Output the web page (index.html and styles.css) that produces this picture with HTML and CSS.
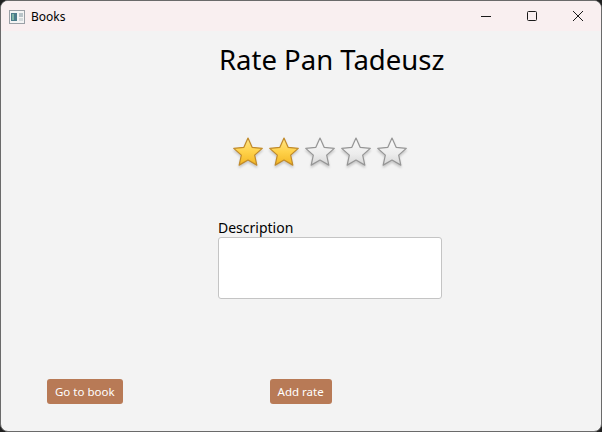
FILE: index.html
```html
<!DOCTYPE html>
<html>
<head>
<meta charset="utf-8">
<link rel="stylesheet" href="styles.css">
</head>
<body>
<div class="window">
  <div class="titlebar">
    <svg class="app-icon" width="16" height="14" viewBox="0 0 16 14">
      <rect x="0.5" y="0.5" width="15" height="13" fill="#f4f4f4" stroke="#9aa0a6"/>
      <rect x="2" y="3" width="6" height="8" fill="#4c7c8a"/>
      <rect x="3" y="4" width="2" height="6" fill="#7fb4a6"/>
      <rect x="10" y="3" width="4" height="4" fill="#b9c4c9"/>
      <rect x="10" y="8" width="4" height="3" fill="#d4dadc"/>
    </svg>
    <span class="title">Books</span>
    <div class="controls">
      <div class="ctl"><svg width="10" height="10" viewBox="0 0 10 10"><path d="M0 5.5H10" stroke="#1a1a1a" stroke-width="1"/></svg></div>
      <div class="ctl"><svg width="10" height="10" viewBox="0 0 10 10"><rect x="0.5" y="0.5" width="9" height="9" rx="1" fill="none" stroke="#1a1a1a" stroke-width="1"/></svg></div>
      <div class="ctl"><svg width="10" height="10" viewBox="0 0 10 10"><path d="M0 0L10 10M10 0L0 10" stroke="#1a1a1a" stroke-width="1"/></svg></div>
    </div>
  </div>
  <div class="content">
    <h1 class="heading">Rate Pan Tadeusz</h1>
    <div class="stars">
      <svg class="star" viewBox="0 0 32 32"><defs><linearGradient id="g1" x1="0" y1="0" x2="0" y2="1"><stop offset="0" stop-color="#ffe68a"/><stop offset="0.5" stop-color="#ffd24a"/><stop offset="1" stop-color="#f3b623"/></linearGradient></defs><path d="M16 2 L20.11 11.34 L30.27 12.36 L22.66 19.16 L24.82 29.13 L16 24 L7.18 29.13 L9.34 19.16 L1.73 12.36 L11.89 11.34 Z" fill="url(#g1)" stroke="#c08a2a" stroke-width="1.2" stroke-linejoin="round"/></svg>
      <svg class="star" viewBox="0 0 32 32"><path d="M16 2 L20.11 11.34 L30.27 12.36 L22.66 19.16 L24.82 29.13 L16 24 L7.18 29.13 L9.34 19.16 L1.73 12.36 L11.89 11.34 Z" fill="url(#g1)" stroke="#c08a2a" stroke-width="1.2" stroke-linejoin="round"/></svg>
      <svg class="star" viewBox="0 0 32 32"><defs><linearGradient id="g2" x1="0" y1="0" x2="0" y2="1"><stop offset="0" stop-color="#fbfbfb"/><stop offset="0.6" stop-color="#ececec"/><stop offset="1" stop-color="#d6d6d6"/></linearGradient></defs><path d="M16 2 L20.11 11.34 L30.27 12.36 L22.66 19.16 L24.82 29.13 L16 24 L7.18 29.13 L9.34 19.16 L1.73 12.36 L11.89 11.34 Z" fill="url(#g2)" stroke="#959595" stroke-width="1.2" stroke-linejoin="round"/></svg>
      <svg class="star" viewBox="0 0 32 32"><path d="M16 2 L20.11 11.34 L30.27 12.36 L22.66 19.16 L24.82 29.13 L16 24 L7.18 29.13 L9.34 19.16 L1.73 12.36 L11.89 11.34 Z" fill="url(#g2)" stroke="#959595" stroke-width="1.2" stroke-linejoin="round"/></svg>
      <svg class="star" viewBox="0 0 32 32"><path d="M16 2 L20.11 11.34 L30.27 12.36 L22.66 19.16 L24.82 29.13 L16 24 L7.18 29.13 L9.34 19.16 L1.73 12.36 L11.89 11.34 Z" fill="url(#g2)" stroke="#959595" stroke-width="1.2" stroke-linejoin="round"/></svg>
    </div>
    <label class="label">Description</label>
    <div class="textarea"></div>
  </div>
  <div class="actions">
    <button class="btn">Go to book</button>
    <button class="btn">Add rate</button>
  </div>
</div>
</body>
</html>
```
FILE: styles.css
```css
html, body {
  margin: 0;
  padding: 0;
  background: #202020;
}
.window {
  width: 600px;
  height: 430px;
  border: 1px solid #6a6a6a;
  border-radius: 8px;
  overflow: hidden;
  background: #f3f3f3;
  display: flex;
  flex-direction: column;
  font-family: "Noto Sans", "Open Sans", sans-serif;
}
.titlebar {
  height: 30px;
  background: #f9eff0;
  display: flex;
  align-items: center;
  flex-shrink: 0;
}
.app-icon {
  margin-left: 8px;
  margin-top: 1px;
}
.title {
  margin-left: 6px;
  font-size: 12px;
  color: #000;
}
.controls {
  margin-left: auto;
  display: flex;
  height: 100%;
}
.ctl {
  width: 46px;
  display: flex;
  align-items: center;
  justify-content: center;
}
.content {
  display: flex;
  flex-direction: column;
  padding-left: 217px;
  flex: 1;
}
.heading {
  margin: 11px 0 0 1px;
  font-size: 27.5px;
  font-weight: 400;
  line-height: 36px;
  color: #000;
}
.stars {
  display: flex;
  gap: 4px;
  margin: 58px 0 0 14px;
}
.star {
  width: 32px;
  height: 32px;
  filter: drop-shadow(0 2px 1px rgba(0,0,0,0.18));
}
.label {
  margin-top: 51px;
  font-size: 14px;
  line-height: 18px;
  color: #000;
}
.textarea {
  width: 222px;
  height: 60px;
  background: #fff;
  border: 1px solid #c4c4c4;
  border-radius: 3px;
}
.actions {
  display: flex;
  gap: 147px;
  padding-left: 46px;
  margin-bottom: 27px;
}
.btn {
  height: 25px;
  padding: 0 8px;
  border: none;
  border-radius: 3px;
  background: #b87a56;
  color: #fff;
  font-family: "Noto Sans", "Open Sans", sans-serif;
  font-size: 11.5px;
}
```
